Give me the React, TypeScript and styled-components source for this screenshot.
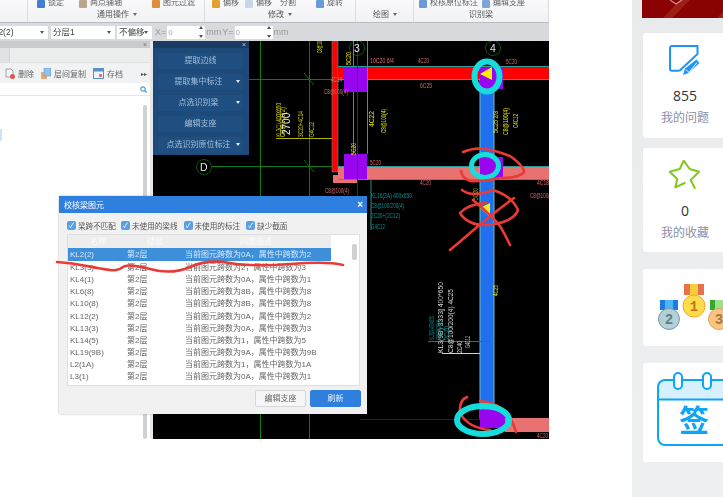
import React from "react";
import styled, { createGlobalStyle } from "styled-components";

const Global = createGlobalStyle`
  html, body { margin: 0; padding: 0; background: #fff; }
  body { font-family: "Noto Sans CJK SC", "Noto Sans", sans-serif; }
  #root { width: 723px; height: 497px; overflow: hidden; }
`;

const CJK = `"Liberation Sans", "Noto Sans CJK SC", sans-serif`;

const Page = styled.div`
  display: flex;
  width: 723px;
  height: 497px;
  overflow: hidden;
  background: #fff;
`;

/* ---------- captured software window ---------- */
const Software = styled.div`
  position: relative;
  flex: none;
  display: flex;
  flex-direction: column;
  width: 549px;
  height: 439px;
  overflow: hidden;
  filter: blur(0.5px);
  font-family: ${CJK};
  background: #d9dbde;
`;

const Ribbon = styled.div`
  flex: none;
  display: flex;
  height: 22px;
  background: linear-gradient(#f9f9fa, #f1f2f4);
  border-bottom: 1px solid #b9bcc0;
`;

const RibbonGroup = styled.div<{ $w: number }>`
  flex: none;
  width: ${(p) => p.$w}px;
  display: flex;
  flex-direction: column;
  border-right: 1px solid #dcdee1;
  box-sizing: border-box;
`;

const RibbonTools = styled.div`
  height: 8px;
  display: flex;
  align-items: flex-end;
  overflow: hidden;
`;

const Tool = styled.span<{ $ml: number }>`
  display: inline-flex;
  align-items: flex-end;
  margin-left: ${(p) => p.$ml}px;
  gap: 3px;
  font-size: 8px;
  line-height: 11px;
  color: #5b5e63;
  white-space: nowrap;
`;

const ToolGlyph = styled.i<{ $c: string }>`
  display: block;
  width: 8px;
  height: 8px;
  background: ${(p) => p.$c};
  border-radius: 1px;
`;

const GroupLabel = styled.div<{ $ml: number }>`
  margin-top: 2px;
  margin-left: ${(p) => p.$ml}px;
  font-size: 8px;
  line-height: 10px;
  color: #555;
  white-space: nowrap;
`;

const Caret = styled.span`
  display: inline-block;
  margin-left: 4px;
  vertical-align: 1px;
  border: 2.5px solid transparent;
  border-top: 3px solid #666;
  border-bottom: 0;
`;

const OptionBar = styled.div`
  flex: none;
  display: flex;
  align-items: center;
  height: 18px;
  background: #d8dadd;
  font-size: 8px;
  color: #888;
`;

const SelectBox = styled.div<{ $w: number; $ml: number; $indent?: number }>`
  position: relative;
  flex: none;
  width: ${(p) => p.$w}px;
  margin-left: ${(p) => p.$ml}px;
  height: 13px;
  line-height: 13px;
  background: #fff;
  color: #444;
  font-size: 8.5px;
  overflow: hidden;
  white-space: nowrap;
  box-sizing: border-box;
  padding-left: 2px;
  text-indent: ${(p) => p.$indent ?? 0}px;
  &::after {
    content: "";
    position: absolute;
    right: 4px;
    top: 5px;
    border: 2px solid transparent;
    border-top: 3px solid #555;
    border-bottom: 0;
  }
`;

const Spin = styled.div<{ $ml: number }>`
  position: relative;
  flex: none;
  width: 38px;
  height: 13px;
  margin-left: ${(p) => p.$ml}px;
  background: #fff;
  color: #aaa;
  font-size: 8px;
  line-height: 13px;
  padding-left: 1px;
  box-sizing: border-box;
  &::before, &::after {
    content: "";
    position: absolute;
    right: 2px;
    border: 2px solid transparent;
  }
  &::before { top: 0; border-bottom: 3px solid #555; border-top: 0; }
  &::after { bottom: 1px; border-top: 3px solid #555; border-bottom: 0; }
`;

const Unit = styled.span<{ $ml: number }>`
  margin-left: ${(p) => p.$ml}px;
  color: #999;
  font-size: 9px;
  flex: none;
`;

const Workspace = styled.div`
  flex: 1;
  display: flex;
  min-height: 0;
`;

const LeftPanel = styled.div`
  flex: none;
  width: 150px;
  display: flex;
  flex-direction: column;
  background: #fff;
`;

const PanelHead = styled.div`
  flex: none;
  height: 7px;
  background: #c9cbcf;
  color: #777;
  font-size: 7px;
  line-height: 7px;
  text-align: right;
  padding-right: 3px;
`;

const TabRow = styled.div`
  flex: none;
  height: 15px;
  background: #eceded;
  border-bottom: 1px solid #dfe0e2;
  box-sizing: border-box;
`;

const TabStub = styled.div`
  width: 9px;
  height: 14px;
  background: #e1e2e3;
  border-right: 1px solid #d2d3d5;
`;

const PanelTools = styled.div`
  flex: none;
  display: flex;
  align-items: center;
  height: 20px;
  background: #f1f2f3;
  font-size: 8px;
  color: #666;
`;

const PanelTool = styled.span<{ $ml: number }>`
  display: inline-flex;
  align-items: center;
  margin-left: ${(p) => p.$ml}px;
  gap: 3px;
  white-space: nowrap;
`;

const More = styled.span`
  margin-left: auto;
  margin-right: 3px;
  color: #555;
  font-size: 6px;
`;

const SearchRow = styled.div`
  flex: none;
  display: flex;
  justify-content: flex-end;
  align-items: center;
  height: 12px;
  padding-right: 3px;
  border-bottom: 1px solid #e4e5e7;
`;

const TreeList = styled.div`
  position: relative;
  flex: 1;
  display: flex;
  justify-content: flex-end;
  padding: 9px 3px 0 0;
  background: #fff;
`;

const TreeSel = styled.div`
  position: absolute;
  left: 0;
  top: 33px;
  width: 2px;
  height: 12px;
  background: #cfe4f7;
`;

const TreeBar = styled.div`
  width: 4px;
  background: #d0d1d3;
  border-radius: 2px;
`;

const Gutter = styled.div`
  flex: none;
  width: 3px;
  background: #e6e7e8;
`;

const Canvas = styled.div`
  position: relative;
  flex: 1;
  background: #000;
  overflow: hidden;
`;

const CadSvg = styled.svg`
  display: block;
  width: 396px;
  height: 398px;
`;

const CadText = styled.text<{ $c: string; $fs?: number }>`
  fill: ${(p) => p.$c};
  font-family: "Liberation Sans", sans-serif;
  font-size: ${(p) => p.$fs ?? 6.5}px;
`;

/* floating blue panel */
const FloatPanel = styled.div`
  position: absolute;
  left: 0;
  top: 0;
  width: 96px;
  height: 114px;
  background: #1e4a7a;
  display: flex;
  flex-direction: column;
`;

const FloatHead = styled.div`
  flex: none;
  height: 7px;
  background: #1a3c64;
  color: #b9c7d6;
  font-size: 7px;
  line-height: 7px;
  text-align: right;
  padding-right: 3px;
`;

const FloatList = styled.div`
  flex: 1;
  display: flex;
  flex-direction: column;
  gap: 5px;
  padding: 5px 6px 0 5px;
`;

const FloatBtn = styled.div<{ $arrow?: boolean }>`
  position: relative;
  height: 16px;
  line-height: 15px;
  background: #1f4f80;
  border-radius: 2px;
  color: #a6bfd8;
  font-size: 8px;
  text-align: center;
  padding-right: ${(p) => (p.$arrow ? 4 : 0)}px;
  &::after {
    content: "";
    display: ${(p) => (p.$arrow ? "block" : "none")};
    position: absolute;
    right: 3px;
    top: 6px;
    border: 2.5px solid transparent;
    border-top: 3px solid #e6edf4;
    border-bottom: 0;
  }
`;

/* dialog */
const Dialog = styled.div`
  position: absolute;
  left: 59px;
  top: 196px;
  width: 308px;
  height: 218px;
  background: #f1f1f1;
  display: flex;
  flex-direction: column;
  box-shadow: 0 0 2px rgba(0, 0, 0, 0.3);
`;

const DialogTitle = styled.div`
  flex: none;
  height: 17px;
  display: flex;
  align-items: center;
  justify-content: space-between;
  padding: 0 4px 0 5px;
  background: #2f80de;
  color: #fff;
  font-size: 8px;
`;

const CloseX = styled.span`
  font-size: 10px;
  font-weight: 700;
  line-height: 10px;
`;

const CheckRow = styled.div`
  flex: none;
  display: flex;
  align-items: center;
  height: 21px;
  padding: 3px 0 0 8px;
  box-sizing: border-box;
  font-size: 7.6px;
  color: #555;
`;

const Check = styled.span<{ $ml: number }>`
  display: inline-flex;
  align-items: center;
  gap: 2px;
  margin-left: ${(p) => p.$ml}px;
  white-space: nowrap;
`;

const CheckBox = styled.i`
  display: block;
  width: 9px;
  height: 9px;
  background: #5b9fe3;
  border-radius: 2px;
  color: #fff;
  font-style: normal;
  font-size: 7px;
  line-height: 9px;
  text-align: center;
`;

const TableWrap = styled.div`
  position: relative;
  flex: none;
  margin-left: 8px;
  width: 293px;
  height: 152px;
  background: #fff;
  border: 1px solid #dfe0e2;
  box-sizing: border-box;
  overflow: hidden;
`;

const TableInner = styled.div`
  width: 263px;
`;

const RowGrid = styled.div<{ $sel?: boolean; $head?: boolean }>`
  display: grid;
  grid-template-columns: 57px 58px 1fr;
  height: ${(p) => (p.$head ? 13 : p.$sel ? 13 : 12.17)}px;
  line-height: 13px;
  padding-left: 2px;
  font-size: 8px;
  white-space: nowrap;
  background: ${(p) => (p.$sel ? "#3d8fd9" : p.$head ? "#ededee" : "transparent")};
  color: ${(p) => (p.$sel ? "#d8e8f7" : p.$head ? "#fbfbfb" : "#666")};
`;

const HeadCell = styled.span<{ $ml: number }>`
  margin-left: ${(p) => p.$ml}px;
`;

const TableScroll = styled.div`
  position: absolute;
  right: 2px;
  top: 9px;
  width: 5px;
  height: 16px;
  border-radius: 2px;
  background: #cfd0d2;
`;

const DialogFoot = styled.div`
  flex: none;
  display: flex;
  justify-content: flex-end;
  gap: 4px;
  padding: 4px 6px 0 0;
`;

const DlgBtn = styled.div<{ $primary?: boolean }>`
  width: 51px;
  height: 17px;
  line-height: 16px;
  text-align: center;
  font-size: 8px;
  border-radius: 2px;
  box-sizing: border-box;
  border: 1px solid ${(p) => (p.$primary ? "#2f80de" : "#d6d7d9")};
  background: ${(p) => (p.$primary ? "#2f80de" : "#f6f6f6")};
  color: ${(p) => (p.$primary ? "#e9f2fc" : "#666")};
`;

const Overlay = styled.svg`
  position: absolute;
  left: 0;
  top: 0;
  width: 549px;
  height: 439px;
  pointer-events: none;
`;

/* ---------- right sidebar ---------- */
const Sidebar = styled.aside`
  flex: none;
  width: 91px;
  height: 497px;
  margin-left: 83px;
  padding-left: 11px;
  box-sizing: border-box;
  overflow: hidden;
  background: linear-gradient(#e9eaec, #eff0f2);
`;

const Banner = styled.div`
  position: relative;
  width: 102px;
  height: 18px;
  margin-left: -1px;
  overflow: hidden;
  background: #8b0202;
`;

const BannerArt = styled.svg`
  display: block;
  width: 102px;
  height: 18px;
`;

const Card = styled.div<{ $h: number; $mt: number; $pr?: number }>`
  width: 102px;
  height: ${(p) => p.$h}px;
  margin-top: ${(p) => p.$mt}px;
  padding-right: ${(p) => p.$pr ?? 0}px;
  box-sizing: border-box;
  background: #fff;
  border-radius: 3px;
  display: flex;
  flex-direction: column;
  align-items: center;
`;

const StatIcon = styled.svg`
  display: block;
  margin-top: 12px;
  width: 32px;
  height: 32px;
`;

const StatNum = styled.div`
  margin-top: 9px;
  font-family: "Open Sans", "Noto Sans", sans-serif;
  font-size: 14px;
  line-height: 19px;
  color: #333;
`;

const StatLabel = styled.div`
  margin-top: 3px;
  font-family: "Noto Sans CJK SC", sans-serif;
  font-size: 12px;
  line-height: 17px;
  color: #8b90a6;
`;

const Medals = styled.svg`
  display: block;
  margin-top: 13px;
  width: 86px;
  height: 50px;
`;

const MedalDigit = styled.text<{ $c: string }>`
  fill: ${(p) => p.$c};
  font-family: "Liberation Mono", monospace;
  font-weight: 700;
  font-size: 14px;
  text-anchor: middle;
`;

const CalendarWrap = styled.div`
  position: relative;
  margin-top: 9px;
  width: 74px;
  height: 76px;
`;

const CalendarArt = styled.svg`
  display: block;
  width: 74px;
  height: 76px;
`;

const Sign = styled.span`
  position: absolute;
  left: 0;
  right: 0;
  top: 28px;
  text-align: center;
  font-family: "Noto Sans CJK SC", sans-serif;
  font-weight: 700;
  font-size: 30px;
  line-height: 36px;
  color: #0ba6f6;
`;

/* ---------- data ---------- */
const rows: [string, string][] = [
  ["KL2(2)", "当前图元跨数为0A，属性中跨数为2"],
  ["KL3(3)", "当前图元跨数为2，属性中跨数为3"],
  ["KL4(1)", "当前图元跨数为0A，属性中跨数为1"],
  ["KL6(8)", "当前图元跨数为8B，属性中跨数为8"],
  ["KL10(8)", "当前图元跨数为8B，属性中跨数为8"],
  ["KL12(2)", "当前图元跨数为0A，属性中跨数为2"],
  ["KL13(3)", "当前图元跨数为0A，属性中跨数为3"],
  ["KL14(5)", "当前图元跨数为1，属性中跨数为5"],
  ["KL19(9B)", "当前图元跨数为9A，属性中跨数为9B"],
  ["L2(1A)", "当前图元跨数为1，属性中跨数为1A"],
  ["L3(1)", "当前图元跨数为0A，属性中跨数为1"],
];

type L = [string, number, number, number, string];
const flat: L[] = [
  ["10C20 6/4", 370, 63, 24, "#e06a6a"],
  ["4C20", 418, 63, 11, "#e06a6a"],
  ["5C20", 506, 64, 11, "#e06a6a"],
  ["4C14", 331, 82, 11, "#b08a8a"],
  ["C8@100(4)", 324, 94, 24, "#d86666"],
  ["6C25", 420, 88, 12, "#d86666"],
  ["5C20", 370, 165, 11, "#e06a6a"],
  ["4C20", 420, 185, 11, "#d86666"],
  ["4C18", 537, 185, 12, "#d86666"],
  ["C8@100(4)", 530, 198, 24, "#d86666"],
  ["C8@100(4)", 325, 193, 24, "#d86666"],
  ["4C20", 537, 438, 11, "#d86666"],
  ["KL16(2A) 400x650", 371, 198, 41, "#0f8f8f"],
  ["C8@100/200(4)", 371, 208, 33, "#0f8f8f"],
  ["2C20+(2C12)", 371, 218, 29, "#0f8f8f"],
  ["G4C12", 371, 229, 14, "#0f8f8f"],
];
const vert: L[] = [
  ["C8@100(4)", 322, 53, 18, "#e6e600"],
  ["5C20", 351, 65, 13, "#e6e600"],
  ["4C22", 374, 127, 16, "#e6e600"],
  ["C8@100(4)", 386, 133, 24, "#e6e600"],
  ["5C25 2/3", 498, 133, 22, "#e6e600"],
  ["C8@100(4)", 508, 135, 27, "#e6e600"],
  ["C4C12", 518, 128, 14, "#e6e600"],
  ["5C20", 356, 155, 12, "#e6e600"],
  ["4C25", 498, 296, 11, "#e6e600"],
  ["5C20", 478, 200, 12, "#a8a800"],
  ["KL3(1) 400X650", 281, 137, 34, "#d8d800"],
  ["C8@100(2)", 285, 137, 30, "#d8d800"],
  ["3C20+4C14", 303, 137, 26, "#d8d800"],
  ["G4C12", 314, 137, 15, "#d8d800"],
  ["KL3(9B) 3333] 400*650", 443, 353, 71, "#d9dddd"],
  ["C8@100/200(4) 4C25", 453, 353, 64, "#d9dddd"],
  ["2C40", 462, 353, 12, "#d9dddd"],
  ["G4C12", 470, 348, 12, "#bfc4c4"],
  ["KL3(2) 400x650", 434, 340, 24, "#0f8f8f"],
  ["C8@100/200(4)", 441, 340, 20, "#0f8f8f"],
  ["2C20", 449, 340, 14, "#0f8f8f"],
];

const Ticks: React.FC = () => (
  <g stroke="#0d6b0d" strokeWidth="1">
    <path d="M304 73 L314 85 M304 160 L314 172" />
  </g>
);

const App: React.FC = () => (
  <Page>
    <Global />
    <Software>
      <Ribbon>
        <RibbonGroup $w={28} />
        <RibbonGroup $w={177}>
          <RibbonTools>
            <Tool $ml={9}><ToolGlyph $c="#3f7fd6" />锁定</Tool>
            <Tool $ml={15}><ToolGlyph $c="#b9a58a" />两点辅轴</Tool>
            <Tool $ml={30}><ToolGlyph $c="#e08a3c" />图元过滤</Tool>
          </RibbonTools>
          <GroupLabel $ml={69}>通用操作<Caret /></GroupLabel>
        </RibbonGroup>
        <RibbonGroup $w={151}>
          <RibbonTools>
            <Tool $ml={7}><ToolGlyph $c="#e2a02f" />偏移</Tool>
            <Tool $ml={6}><ToolGlyph $c="#c8d6ea" />偏移</Tool>
            <Tool $ml={8}>分割</Tool>
            <Tool $ml={20}><ToolGlyph $c="#6b9bd6" />旋转</Tool>
          </RibbonTools>
          <GroupLabel $ml={63}>修改<Caret /></GroupLabel>
        </RibbonGroup>
        <RibbonGroup $w={58}>
          <RibbonTools />
          <GroupLabel $ml={17}>绘图<Caret /></GroupLabel>
        </RibbonGroup>
        <RibbonGroup $w={135}>
          <RibbonTools>
            <Tool $ml={5}><ToolGlyph $c="#6b9bd6" />校核原位标注</Tool>
            <Tool $ml={4}><ToolGlyph $c="#7ea6d8" />编辑支座</Tool>
          </RibbonTools>
          <GroupLabel $ml={55}>识别梁</GroupLabel>
        </RibbonGroup>
      </Ribbon>
      <OptionBar>
        <SelectBox $w={48} $ml={0} $indent={-14}>KL2(2)</SelectBox>
        <SelectBox $w={64} $ml={3}>分层1</SelectBox>
        <SelectBox $w={35} $ml={2}>不偏移</SelectBox>
        <Unit $ml={3}>X=</Unit>
        <Spin $ml={1}>0</Spin>
        <Unit $ml={1}>mm</Unit>
        <Unit $ml={1}>Y=</Unit>
        <Spin $ml={1}>0</Spin>
        <Unit $ml={1}>mm</Unit>
      </OptionBar>
      <Workspace>
        <LeftPanel>
          <PanelHead>×</PanelHead>
          <TabRow><TabStub /></TabRow>
          <PanelTools>
            <PanelTool $ml={5}>
              <svg width="10" height="11" viewBox="0 0 10 11"><path d="M1 1h5l2 2v6H1z" fill="#f5f5f5" stroke="#9aa0a8" /><circle cx="7.5" cy="8.5" r="2.5" fill="#e2554f" /></svg>
              删除
            </PanelTool>
            <PanelTool $ml={7}>
              <svg width="10" height="11" viewBox="0 0 10 11"><rect x="0" y="4" width="6" height="7" fill="#f2a66a" /><rect x="3" y="0" width="7" height="8" fill="#8fc0ee" stroke="#5a9ade" strokeWidth=".6" /></svg>
              层间复制
            </PanelTool>
            <PanelTool $ml={7}>
              <svg width="11" height="11" viewBox="0 0 11 11"><rect x=".5" y=".5" width="10" height="10" fill="#eaf2fb" stroke="#5b8fc8" /><rect x=".5" y=".5" width="10" height="3" fill="#5b8fc8" /><rect x="6" y="6" width="3" height="3" fill="#d9776f" /></svg>
              存档
            </PanelTool>
            <More>▸▸</More>
          </PanelTools>
          <SearchRow>
            <svg width="7" height="7" viewBox="0 0 7 7"><circle cx="3" cy="3" r="2.2" fill="none" stroke="#4b9fdc" strokeWidth="1.2" /><path d="M4.6 4.6L6.6 6.6" stroke="#4b9fdc" strokeWidth="1.4" /></svg>
          </SearchRow>
          <TreeList>
            <TreeSel />
            <TreeBar />
          </TreeList>
        </LeftPanel>
        <Gutter />
        <Canvas>
          <CadSvg viewBox="153 41 396 398">
            {/* grid */}
            <g stroke="#0d7a0d" strokeWidth="1" fill="none">
              <path d="M260.5 41V439M309.5 41V439M249 79.5H549M212 166.5H549" />
            </g>
            <g stroke="#0a560a" strokeWidth="1" fill="none">
              <circle cx="204" cy="167" r="7.5" />
              <circle cx="357" cy="48" r="7.5" />
              <circle cx="493" cy="48" r="7.5" />
            </g>
            <Ticks />
            <path d="M276 138.5H332" stroke="#b5b500" strokeWidth="1" />
            {/* beams */}
            <rect x="333" y="175" width="24" height="8" fill="#e87272" />
            <rect x="332" y="41" width="6" height="131" fill="#ff0000" stroke="#2a9d9d" strokeWidth=".6" />
            <rect x="338" y="67" width="211" height="12" fill="#ff0000" />
            <rect x="338" y="167" width="211" height="12" fill="#e87272" />
            <path d="M338 66.5H549M338 79.5H549M338 166.5H549M338 179.5H549" stroke="#2f9a9a" strokeWidth="1" />
            <path d="M353.5 41V170M367.5 41V154" stroke="#2f9a9a" strokeWidth="1" />
            <rect x="344" y="67" width="23" height="25" fill="#9a05f0" />
            <rect x="344" y="154" width="23" height="25" fill="#9a05f0" />
            <path d="M357.5 41V200" stroke="#a00000" strokeWidth="1" />
            {/* blue column */}
            <rect x="480" y="79" width="14" height="340" fill="#1f6fef" stroke="#6cbcc4" strokeWidth="1" />
            <rect x="480" y="68" width="23" height="21" fill="#9a05f0" />
            <rect x="480" y="157" width="23" height="22" fill="#9a05f0" />
            <rect x="505" y="418" width="44" height="14" fill="#e87272" />
            <path d="M360 419.5H505" stroke="#7a0000" strokeWidth="1" />
            <rect x="480" y="410" width="25" height="18" fill="#9a05f0" />
            <path d="M428 341.5H490" stroke="#0f7f7f" strokeWidth="1" />
            <path d="M442 353.5H480" stroke="#cfd3d3" strokeWidth="1" />
            <path d="M371 180V230" stroke="#1a8f8f" strokeWidth="1" />
            {/* labels */}
            {flat.map(([t, x, y, w, c], i) => (
              <CadText key={i} x={x} y={y} $c={c} textLength={w} lengthAdjust="spacingAndGlyphs">{t}</CadText>
            ))}
            {vert.map(([t, x, y, w, c], i) => (
              <CadText key={i} transform={`translate(${x} ${y}) rotate(-90)`} $c={c} textLength={w} lengthAdjust="spacingAndGlyphs">{t}</CadText>
            ))}
            <CadText transform="translate(290 135) rotate(-90)" $c="#e8e8e8" $fs={10}>2700</CadText>
            <CadText x={200} y={171} $c="#e4e4e4" $fs={10.5}>D</CadText>
            <CadText x={354} y={52} $c="#e4e4e4" $fs={10.5}>3</CadText>
            <CadText x={490} y={52} $c="#e4e4e4" $fs={10.5}>4</CadText>
            {/* marks on the column */}
            <polygon points="492,67 492,80 480,74" fill="#ffee00" />
            <polygon points="490,203 490,217 480,208" fill="#ffee00" />
          </CadSvg>
          <FloatPanel>
            <FloatHead>×</FloatHead>
            <FloatList>
              <FloatBtn>提取边线</FloatBtn>
              <FloatBtn $arrow>提取集中标注</FloatBtn>
              <FloatBtn $arrow>点选识别梁</FloatBtn>
              <FloatBtn>编辑支座</FloatBtn>
              <FloatBtn $arrow>点选识别原位标注</FloatBtn>
            </FloatList>
          </FloatPanel>
        </Canvas>
      </Workspace>
      <Dialog>
        <DialogTitle>校核梁图元<CloseX>×</CloseX></DialogTitle>
        <CheckRow>
          <Check $ml={0}><CheckBox>✓</CheckBox>梁跨不匹配</Check>
          <Check $ml={5}><CheckBox>✓</CheckBox>未使用的梁线</Check>
          <Check $ml={6}><CheckBox>✓</CheckBox>未使用的标注</Check>
          <Check $ml={6}><CheckBox>✓</CheckBox>缺少截面</Check>
        </CheckRow>
        <TableWrap>
          <TableInner>
            <RowGrid $head>
              <HeadCell $ml={20}>名称</HeadCell>
              <HeadCell $ml={20}>楼层</HeadCell>
              <HeadCell $ml={55}>问题描述</HeadCell>
            </RowGrid>
            {rows.map(([n, d], i) => (
              <RowGrid key={n} $sel={i === 0}>
                <span>{n}</span>
                <span>第2层</span>
                <span>{d}</span>
              </RowGrid>
            ))}
          </TableInner>
          <TableScroll />
        </TableWrap>
        <DialogFoot>
          <DlgBtn>编辑支座</DlgBtn>
          <DlgBtn $primary>刷新</DlgBtn>
        </DialogFoot>
      </Dialog>
      <Overlay viewBox="0 0 549 439">
        <g fill="none" stroke="#16dcdc">
          <ellipse cx="487" cy="76.5" rx="12.5" ry="15" strokeWidth="6" />
          <ellipse cx="485" cy="166" rx="13.5" ry="11.5" strokeWidth="5" />
        </g>
        <g fill="none" stroke="#ea3a36" strokeWidth="2.6" strokeLinecap="round" strokeLinejoin="round">
          <path d="M57 262 Q72 263 87 266 T110 270 T123 267 T150 269 T190 267 T230 263 T290 264 T343 265" />
          <path d="M463 152 Q475 147 486 149 T510 156 Q524 166 524 172 Q520 178 500 178 Q480 182 470 181 Q462 178 461 171" />
          <path d="M462 190 Q472 198 493 190 Q512 196 518 210 Q514 222 488 225 Q468 226 460 213 Q468 204 486 203" />
          <path d="M450 250 Q462 240 477 227 Q495 212 514 198" />
          <path d="M473 200 Q492 216 500 226 Q506 236 510 245" />
          <path d="M467 397 Q459 400 460 413 Q468 428 490 430 M480 401 Q496 402 508 414 Q514 424 516 432" />
        </g>
        <ellipse cx="483" cy="420" rx="26" ry="14" fill="none" stroke="#16dcdc" strokeWidth="6" />
      </Overlay>
    </Software>

    <Sidebar>
      <Banner>
        <BannerArt viewBox="0 0 102 18">
          <path d="M21 18L38 0H48L30 18zM75 18L92 0H96L84 18z" fill="#9b1f14" />
          <path d="M28 0l6 4 6-4" fill="none" stroke="#c9918c" strokeWidth="1.2" />
        </BannerArt>
      </Banner>
      <Card $h={105} $mt={15} $pr={18}>
        <StatIcon viewBox="0 0 32 32">
          <path d="M10.500 25.700H3A2 2 0 0 1 1 23.700V3A2 2 0 0 1 3 1H28.500V9L10.500 25.700" fill="none" stroke="#1f94f8" strokeWidth="2" strokeLinejoin="round" />
          <path d="M14 30L16 23.500L27.500 14.500L30.500 18L19.500 28Z" fill="#1f94f8" />
          <path d="M17 24.500L20 27.500L28 17.500" fill="none" stroke="#fff" strokeWidth=".9" />
        </StatIcon>
        <StatNum>855</StatNum>
        <StatLabel>我的问题</StatLabel>
      </Card>
      <Card $h={104} $mt={10} $pr={18}>
        <StatIcon viewBox="0 0 32 32">
          <path d="M15.700 23L6.300 27.300L8.300 19L.7 11.700L10.700 9L14.700 .7L20.700 9L30 11.700L21.700 20L25.700 28" fill="none" stroke="#82c81e" strokeWidth="2" strokeLinejoin="round" strokeLinecap="round" />
        </StatIcon>
        <StatNum>0</StatNum>
        <StatLabel>我的收藏</StatLabel>
      </Card>
      <Card $h={77} $mt={17}>
        <Medals viewBox="0 0 86 50">
          <rect x="33" y="2" width="20" height="11" fill="#e8704a" />
          <rect x="39" y="2" width="8" height="11" fill="#f4cf3a" />
          <circle cx="43" cy="24" r="11" fill="#ffdb4d" stroke="#f5a623" strokeWidth="1" />
          <MedalDigit x={43} y={29} $c="#c9701c">1</MedalDigit>
          <rect x="9" y="18" width="18" height="10" fill="#1f7ae0" />
          <rect x="14" y="18" width="8" height="10" fill="#4db4f4" />
          <circle cx="18" cy="37" r="10.500" fill="#b2d1d6" stroke="#7d979d" strokeWidth="1" />
          <MedalDigit x={18} y={42} $c="#5f7f88">2</MedalDigit>
          <rect x="59" y="18" width="18" height="10" fill="#36a82e" />
          <rect x="64" y="18" width="8" height="10" fill="#9fe08a" />
          <circle cx="68" cy="37" r="10.500" fill="#fbc57f" stroke="#dca45f" strokeWidth="1" />
          <MedalDigit x={68} y={42} $c="#a9773e">3</MedalDigit>
        </Medals>
      </Card>
      <Card $h={99} $mt={17}>
        <CalendarWrap>
          <CalendarArt viewBox="0 0 74 76">
            <path d="M1 28V15a7 7 0 0 1 7-7H66a7 7 0 0 1 7 7V28Z" fill="#d6f0ff" />
            <rect x="1" y="8" width="72" height="65" rx="7" fill="none" stroke="#0ba6f6" strokeWidth="2" />
            <path d="M1 27.500H73" stroke="#0ba6f6" strokeWidth="2" />
            <rect x="17" y="1" width="8" height="16" rx="4" fill="#fff" stroke="#0ba6f6" strokeWidth="2" />
            <rect x="46" y="1" width="8" height="16" rx="4" fill="#fff" stroke="#0ba6f6" strokeWidth="2" />
          </CalendarArt>
          <Sign>签</Sign>
        </CalendarWrap>
      </Card>
    </Sidebar>
  </Page>
);

export default App;
